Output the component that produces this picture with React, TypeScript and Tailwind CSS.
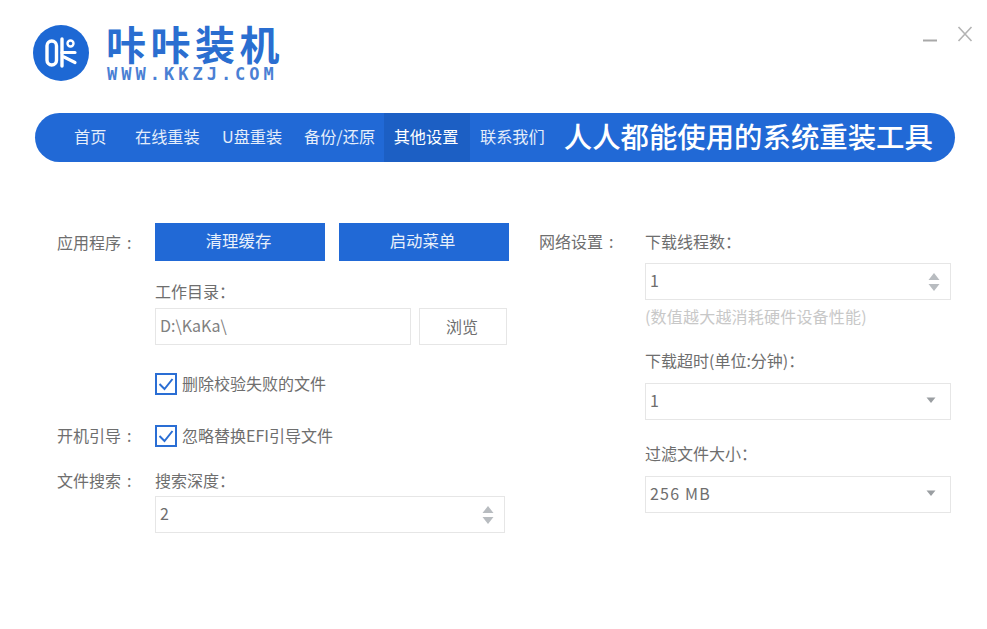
const cjk = "font-['Noto_Sans_CJK_SC','Noto_Sans',sans-serif]";

const navItems = [
  { label: "首页", className: "ml-[39px] w-[32px]" },
  { label: "在线重装", className: "ml-[29px] w-[65px]" },
  { label: "U盘重装", className: "ml-[22px] w-[62px]" },
  { label: "备份/还原", className: "ml-[20px] w-[72px]" },
];

function Logo() {
  return (
    <svg width="58" height="58" viewBox="0 0 58 58" className="shrink-0">
      <circle cx="29" cy="29" r="28" fill="#1d68d4" />
      <rect x="15" y="17" width="9.5" height="24" rx="4.75" fill="none" stroke="#fff" strokeWidth="3.4" />
      <path d="M30 15v27" stroke="#fff" strokeWidth="3.4" strokeLinecap="round" fill="none" />
      <path d="M30 28.5h13M32 33l11 5.5" stroke="#fff" strokeWidth="3.2" strokeLinecap="round" fill="none" />
      <circle cx="38.5" cy="19.5" r="3" fill="none" stroke="#fff" strokeWidth="2.4" />
    </svg>
  );
}

function Stepper() {
  return (
    <svg width="14" height="20" viewBox="0 0 14 20">
      <path d="M7 1l5.5 7h-11z" fill="#b8bcc0" />
      <path d="M7 19l5.5-7h-11z" fill="#b8bcc0" />
    </svg>
  );
}

function Caret() {
  return (
    <svg width="12" height="8" viewBox="0 0 12 8" className="mb-[3px]">
      <path d="M6 7L1.5 1.5h9z" fill="#9a9ea2" />
    </svg>
  );
}

// Section label with the wider colon spacing the app uses
function Label({ text, className }: { text: string; className: string }) {
  return (
    <span className={`flex w-[98px] shrink-0 items-start ${className}`}>
      {text}
      <span className="ml-[6px]">:</span>
    </span>
  );
}

function Checkbox({ label }: { label: string }) {
  return (
    <div className="flex h-[22px] items-center">
      <span className="flex h-[22px] w-[22px] items-center justify-center border-2 border-[#2a6ed4] bg-white">
        <svg width="16" height="14" viewBox="0 0 16 14">
          <path d="M1.5 7l5 5 8-10" fill="none" stroke="#2a6ed4" strokeWidth="2" />
        </svg>
      </span>
      <span className="ml-[5px] pb-[2px] text-[16px] leading-[22px] text-[#6e6e6e]">{label}</span>
    </div>
  );
}

function Field({
  value,
  className,
  children,
}: {
  value: string;
  className: string;
  children?: React.ReactNode;
}) {
  return (
    <div
      className={`flex items-center justify-between border border-[#e6e6e6] bg-white pl-[4px] text-[16px] text-[#6e6e6e] ${className}`}
    >
      <span className="pb-[3px]">{value}</span>
      {children}
    </div>
  );
}

export default function App() {
  return (
    <div className={`h-[629px] w-[987px] overflow-hidden bg-white text-[16px] text-[#6e6e6e] ${cjk}`}>
      {/* Title bar */}
      <header className="flex h-[113px] items-start justify-between pl-[32px] pr-[14px] pt-[24px]">
        <div className="flex">
          <Logo />
          <div className="ml-[16px] flex flex-col">
            <span className="h-[42px] text-[40px] font-bold leading-[38px] tracking-[4.5px] text-[#2a6ed0]">
              咔咔装机
            </span>
            <span className="pl-[1px] font-['DejaVu_Sans_Mono',monospace] text-[17px] font-bold leading-[17px] tracking-[4px] text-[#4a80d4]">
              WWW.KKZJ.COM
            </span>
          </div>
        </div>
        <div className="flex items-start pt-[2px]">
          <svg width="16" height="16" viewBox="0 0 16 16" className="mt-[1px]">
            <path d="M1 13.5h14" stroke="#a8a8a8" strokeWidth="2" />
          </svg>
          <svg width="16" height="16" viewBox="0 0 16 16" className="ml-[19px]">
            <path d="M1.5 1l13 14M14.5 1l-13 14" stroke="#b4b4b4" strokeWidth="1.6" fill="none" />
          </svg>
        </div>
      </header>

      {/* Nav */}
      <nav className="ml-[35px] flex h-[49px] w-[920px] items-center rounded-full bg-[#2169d6] text-[16.2px] text-[#e4edfa]">
        {navItems.map((item) => (
          <span key={item.label} className={`whitespace-nowrap pb-[2px] ${item.className}`}>
            {item.label}
          </span>
        ))}
        <span className="ml-[8px] flex h-full w-[86px] items-center justify-center bg-[#1c5fc4] pb-[2px] pr-[2px] text-white">
          其他设置
        </span>
        <span className="ml-[10px] whitespace-nowrap pb-[2px]">联系我们</span>
        <span className="ml-[19px] whitespace-nowrap pb-[2px] text-[28.4px] font-medium leading-none text-white">
          人人都能使用的系统重装工具
        </span>
      </nav>

      <main className="ml-[57px] mt-[61px] flex">
        {/* Left column */}
        <section className="w-[482px]">
          <div className="flex">
            <Label text="应用程序" className="pt-[7px] leading-[24px]" />
            <div>
              <div className="flex gap-[14px]">
                <button className="h-[38px] w-[170px] bg-[#2169d6] pb-[3px] pr-[3px] text-[16.4px] text-[#e8f0fb]">清理缓存</button>
                <button className="h-[38px] w-[170px] bg-[#2169d6] pb-[3px] pr-[3px] text-[16.4px] text-[#e8f0fb]">启动菜单</button>
              </div>
              <div className="mt-[18px] leading-[24px]">工作目录：</div>
              <div className="mt-[5px] flex gap-[8px]">
                <Field value="D:\KaKa\" className="h-[37px] w-[256px] text-[#808080]" />
                <button className="h-[37px] w-[88px] border border-[#e6e6e6] bg-white pb-[2px] pr-[2px] text-[16px] text-[#6e6e6e]">浏览</button>
              </div>
              <div className="mt-[28px]">
                <Checkbox label="删除校验失败的文件" />
              </div>
            </div>
          </div>
          <div className="mt-[30px] flex items-start">
            <Label text="开机引导" className="leading-[20px]" />
            <Checkbox label="忽略替换EFI引导文件" />
          </div>
          <div className="mt-[21px] flex">
            <Label text="文件搜索" className="leading-[24px]" />
            <div>
              <div className="leading-[24px]">搜索深度：</div>
              <Field value="2" className="mt-[4px] h-[37px] w-[350px] pr-[9px]">
                <Stepper />
              </Field>
            </div>
          </div>
        </section>

        {/* Right column */}
        <section className="flex">
          <span className="flex w-[106px] pt-[6px] leading-[24px]">
            网络设置
            <span className="ml-[6px]">:</span>
          </span>
          <div className="w-[306px] pt-[6px]">
            <div className="leading-[24px]">下载线程数：</div>
            <Field value="1" className="mt-[10px] h-[37px] pr-[9px]">
              <Stepper />
            </Field>
            <div className="mt-[5px] text-[16px] leading-[22px] tracking-[0.2px] text-[#c8c8c8]">(数值越大越消耗硬件设备性能)</div>
            <div className="mt-[21px] leading-[24px]">下载超时(单位:分钟)：</div>
            <Field value="1" className="mt-[11px] h-[37px] pr-[13px]">
              <Caret />
            </Field>
            <div className="mt-[21px] leading-[24px]">过滤文件大小：</div>
            <Field value="256 MB" className="mt-[11px] h-[37px] pr-[13px] tracking-[1.2px]">
              <Caret />
            </Field>
          </div>
        </section>
      </main>
    </div>
  );
}
